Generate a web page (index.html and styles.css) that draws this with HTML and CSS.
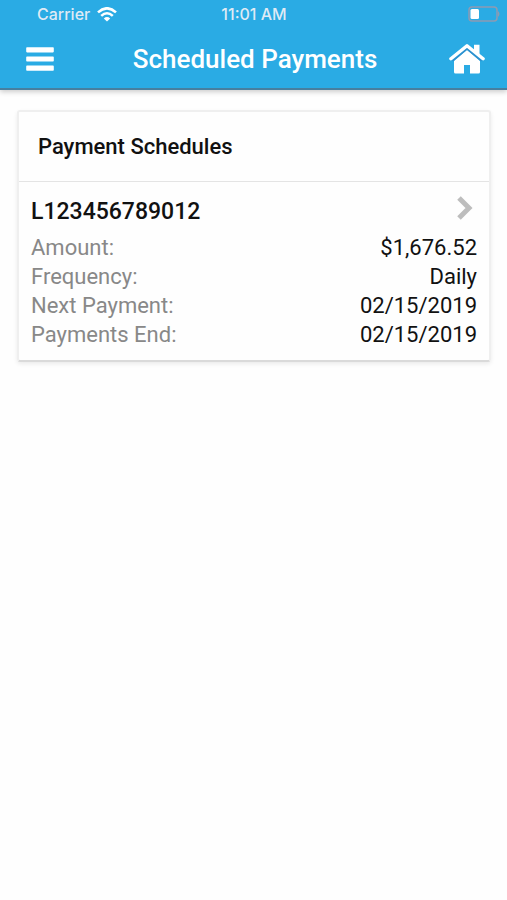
FILE: index.html
```html
<!DOCTYPE html>
<html lang="en">
<head>
<meta charset="utf-8">
<meta name="viewport" content="width=device-width, initial-scale=1">
<title>Scheduled Payments</title>
<link rel="stylesheet" href="styles.css">
</head>
<body>
<header class="top">
  <div class="status">
    <div class="carrier">
      <span>Carrier</span>
      <svg class="wifi" viewBox="0 0 20 15" aria-hidden="true"><path d="M1 5.4Q10-2.8 19 5.4M4.2 8.9Q10 3.6 15.8 8.9" fill="none" stroke="currentColor" stroke-width="2.6"/><path d="M6.8 11.4Q10 8.6 13.2 11.4L10 14.6z" fill="currentColor"/></svg>
    </div>
    <span class="time">11:01 AM</span>
    <svg class="battery" viewBox="0 0 32 16" aria-hidden="true"><rect x="1" y="1" width="28" height="14" rx="3" fill="none" stroke="#8d9bb2" stroke-width="1.5"/><path d="M30 5q3 3 0 6z" fill="#8d9bb2"/><rect x="2.500" y="3" width="8.500" height="10" rx="1.500" fill="#fff"/></svg>
  </div>
  <nav class="bar">
    <button class="icon-button" type="button" aria-label="Menu"><svg class="menu" viewBox="0 0 30 26" aria-hidden="true"><path d="M2 2h26v3.600H2zM2 11.200h26v3.600H2zM2 20.400h26v3.600H2z" fill="currentColor" stroke="currentColor" stroke-width="1.600" stroke-linejoin="round"/></svg></button>
    <h1 class="title">Scheduled Payments</h1>
    <a class="icon-button home-link" href="#home" aria-label="Home"><svg class="home" viewBox="0 0 36 30" aria-hidden="true"><path d="M18 6L5 17V28Q5 29.500 6.500 29.500H15V21H21V29.500H29.500Q31 29.500 31 28V17z" fill="currentColor"/><path d="M25 .8H30.500V12L25 8z" fill="currentColor"/><path d="M3.500 16.800L18 4.800L32.500 16.800" fill="none" stroke="#2f8fce" stroke-width="1.500"/><path d="M1.900 14.800L18 1.800L34.100 14.800" fill="none" stroke="currentColor" stroke-width="3.400" stroke-linecap="round" stroke-linejoin="round"/></svg></a>
  </nav>
</header>
<main class="content">
  <section class="card">
    <h2 class="card-title">Payment Schedules</h2>
    <a class="schedule" href="#schedule">
      <div class="account">
        <h3 class="number">L123456789012</h3>
        <svg class="chevron" viewBox="0 0 16 24" aria-hidden="true"><path d="M2 2L12 12L2 22" fill="none" stroke="#bdbdbd" stroke-width="5"/></svg>
      </div>
      <dl class="details">
        <div class="row"><dt>Amount:</dt><dd>$1,676.52</dd></div>
        <div class="row"><dt>Frequency:</dt><dd>Daily</dd></div>
        <div class="row"><dt>Next Payment:</dt><dd>02/15/2019</dd></div>
        <div class="row"><dt>Payments End:</dt><dd>02/15/2019</dd></div>
      </dl>
    </a>
  </section>
</main>
</body>
</html>
```
FILE: styles.css
```css
* {
  box-sizing: border-box;
}

body {
  margin: 0;
  background: #fefefe;
  color: #111;
  font-family: Roboto, sans-serif;
}

h1, h2, h3, dl, dd {
  margin: 0;
  font-weight: 500;
}

svg {
  display: block;
}

.top {
  background: #2aabe4;
  color: #fff;
  border-bottom: 2px solid #477f9f;
  box-shadow: 0 2px 5px rgba(0, 0, 0, .2);
}

.status {
  display: grid;
  grid-template-columns: 1fr auto 1fr;
  align-items: center;
  height: 28px;
  padding: 0 7px 0 37px;
  color: #dfeaf5;
  font-family: Inter, sans-serif;
  font-size: 16px;
  font-weight: 500;
}

.carrier {
  display: flex;
  align-items: center;
  gap: 7px;
}

.wifi {
  width: 20px;
  height: 15px;
  color: #fff;
}

.time {
  margin-right: 29px;
}

.battery {
  width: 32px;
  height: 16px;
  justify-self: end;
}

.bar {
  display: grid;
  grid-template-columns: 1fr auto 1fr;
  align-items: center;
  height: 60px;
  padding: 1px 22px 0 25px;
}

.icon-button {
  justify-self: start;
  padding: 0;
  border: 0;
  background: none;
  color: #fff;
}

.home-link {
  justify-self: end;
}

.menu {
  width: 30px;
  height: 26px;
}

.home {
  width: 36px;
  height: 30px;
}

.title {
  font-size: 26px;
  line-height: 32px;
}

.content {
  padding: 20px 16px 20px 17px;
}

.card {
  border: 2px solid #efefef;
  border-bottom-color: #dadada;
  border-radius: 3px;
  box-shadow: 0 2px 4px rgba(0, 0, 0, .08);
}

.card-title {
  padding: 21px 19px 20px;
  border-bottom: 1px solid #e4e4e4;
  font-size: 22px;
  line-height: 28px;
}

.schedule {
  display: block;
  padding: 12px 12px 11px;
  color: inherit;
  text-decoration: none;
}

.account {
  display: flex;
  justify-content: space-between;
  align-items: flex-start;
  padding-bottom: 3px;
}

.number {
  font-size: 23px;
  line-height: 36px;
}

.chevron {
  width: 16px;
  height: 24px;
  margin: 2px 4px 0 0;
}

.row {
  display: flex;
  justify-content: space-between;
  font-size: 22px;
  line-height: 29px;
}

.row dt {
  color: #888;
}

.row dt,
.row dd {
  font-weight: 400;
}
```
